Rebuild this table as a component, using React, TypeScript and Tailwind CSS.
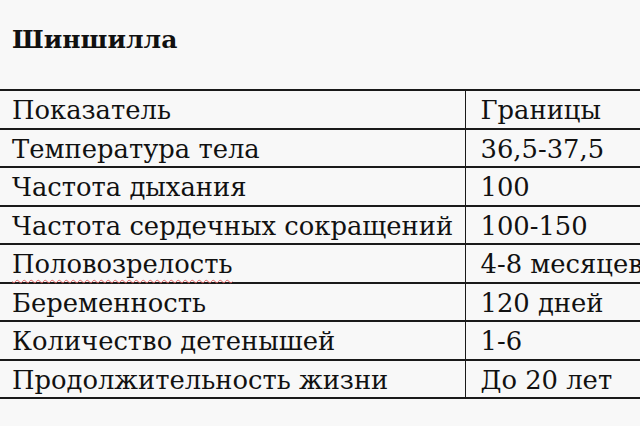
const rows: [string, string][] = [
  ["Показатель", "Границы"],
  ["Температура тела", "36,5-37,5"],
  ["Частота дыхания", "100"],
  ["Частота сердечных сокращений", "100-150"],
  ["Половозрелость", "4-8 месяцев"],
  ["Беременность", "120 дней"],
  ["Количество детенышей", "1-6"],
  ["Продолжительность жизни", "До 20 лет"],
];

export default function App() {
  return (
    <div className="h-[426px] w-[640px] overflow-hidden bg-[#f8f8f8] text-[#111] [font-family:'DejaVu_Serif',serif]">
      <h1 className="h-[89px] pl-[12px] pt-[23px] text-[25px] font-bold leading-[34px]">Шиншилла</h1>
      <table className="w-[800px] table-fixed border-collapse">
        <colgroup>
          <col className="w-[465px]" />
          <col />
        </colgroup>
        <tbody>
          {rows.map(([label, value], i) => (
            <tr key={i} className="h-[38.5px] border-y-2 border-[#1a1a1a]">
              <td className="border-r-[1.5px] border-[#1a1a1a] pl-[12px] pt-[3px] align-middle text-[25.8px] leading-[33px] whitespace-nowrap">
                {label === "Половозрелость" ? (
                  <span className="underline decoration-wavy decoration-[#e06060] decoration-1 underline-offset-[6px]">{label}</span>
                ) : (
                  label
                )}
              </td>
              <td className="pl-[15px] pt-[3px] align-middle text-[25.8px] leading-[33px] whitespace-nowrap">{value}</td>
            </tr>
          ))}
        </tbody>
      </table>
    </div>
  );
}
